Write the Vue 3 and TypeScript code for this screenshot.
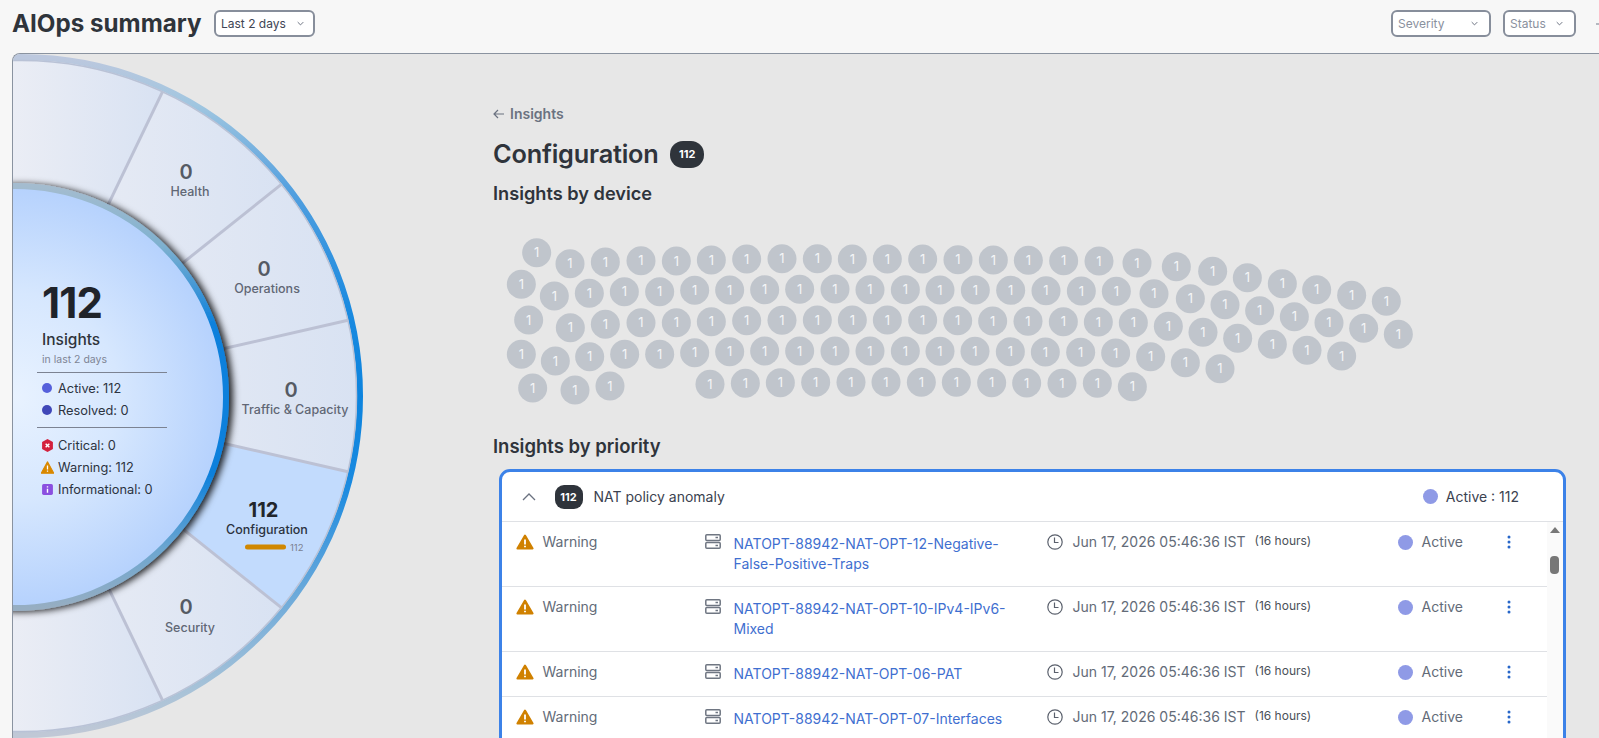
<template>
  <div class="page">
    <header class="top-bar">
      <h1>AIOps summary</h1>
      <button class="select time">
        <span>Last 2 days</span>
        <svg viewBox="0 0 10 6"><path d="M1 1l4 4 4-4" /></svg>
      </button>
      <div class="spacer" />
      <button class="select severity muted">
        <span>Severity</span>
        <svg viewBox="0 0 10 6"><path d="M1 1l4 4 4-4" /></svg>
      </button>
      <button class="select status muted">
        <span>Status</span>
        <svg viewBox="0 0 10 6"><path d="M1 1l4 4 4-4" /></svg>
      </button>
      <span class="cut-glyph" />
    </header>

    <main class="panel">
      <section class="wheel">
        <svg class="wheel-art" viewBox="13 54 467 684" width="467" height="684">
          <defs>
            <linearGradient id="cell">
              <stop offset="0" stop-color="#eceef5" />
              <stop offset="1" stop-color="#d5e0f2" />
            </linearGradient>
            <linearGradient id="rim" x1="0" y1="0" x2="0" y2="1">
              <stop offset="0" stop-color="#bcc8de" />
              <stop offset="0.07" stop-color="#a0c6e0" />
              <stop offset="0.2" stop-color="#519fdf" />
              <stop offset="0.37" stop-color="#1a8ae0" />
              <stop offset="0.5" stop-color="#0d84de" />
              <stop offset="0.63" stop-color="#1a8ae0" />
              <stop offset="0.8" stop-color="#6fabda" />
              <stop offset="0.93" stop-color="#a6c2d8" />
              <stop offset="1" stop-color="#c0c8d6" />
            </linearGradient>
            <linearGradient id="inner-rim" x1="0" y1="0" x2="0" y2="1">
              <stop offset="0" stop-color="#a4bccf" />
              <stop offset="0.14" stop-color="#7fb1cf" />
              <stop offset="0.33" stop-color="#0c80dc" />
              <stop offset="0.68" stop-color="#0c80dc" />
              <stop offset="0.86" stop-color="#6ca6d0" />
              <stop offset="1" stop-color="#97aec2" />
            </linearGradient>
            <radialGradient id="core" gradientUnits="userSpaceOnUse" cx="15" cy="397" r="208">
              <stop offset="0" stop-color="#e8f2ff" />
              <stop offset="0.5" stop-color="#d6e7fe" />
              <stop offset="1" stop-color="#b6d2fd" />
            </radialGradient>
            <clipPath id="disc"><circle cx="21" cy="396" r="336" /></clipPath>
            <filter id="core-shadow" x="-10%" y="-10%" width="125%" height="120%">
              <feDropShadow dx="4" dy="1" stdDeviation="3.5" flood-color="#000" flood-opacity="0.85" />
            </filter>
          </defs>

          <circle cx="21" cy="396" r="338.5" fill="none" stroke="url(#rim)" stroke-width="7" />
          <g clip-path="url(#disc)">
            <path v-for="cell in wheelCells" :key="cell.from" :d="cell.d" :fill="cell.selected ? '#c2dbfd' : 'url(#cell)'" />
            <line
              v-for="(s, i) in spokes"
              :key="i"
              :x1="s.x1"
              :y1="s.y1"
              :x2="s.x2"
              :y2="s.y2"
              stroke="#bcc1d4"
              stroke-width="3"
            />
          </g>
          <circle cx="21" cy="396" r="335.5" fill="none" stroke="#b9c2d6" stroke-width="1.5" />

          <circle cx="15" cy="397" r="211" fill="url(#core)" stroke="url(#inner-rim)" stroke-width="6" filter="url(#core-shadow)" />

          <g v-for="item in wheelLabels" :key="item.name" :class="{ on: item.selected }">
            <text class="cell-count" :x="item.countX" :y="item.countY" text-anchor="middle">{{ item.count }}</text>
            <text class="cell-name" :x="item.nameX" :y="item.nameY" text-anchor="middle">{{ item.name }}</text>
          </g>
          <rect x="245" y="544.5" width="41" height="5" rx="2.5" fill="#d08700" />
          <text class="bar-count" x="290" y="550.5">112</text>
        </svg>

        <div class="summary">
          <div class="big">112</div>
          <div class="big-label">Insights</div>
          <div class="big-sub">in last 2 days</div>
          <div class="group states">
            <div class="line"><i class="dot" style="background: #5560db" />Active: 112</div>
            <div class="line"><i class="dot" style="background: #3f47b8" />Resolved: 0</div>
          </div>
          <div class="group levels">
            <div class="line">
              <svg class="mini" viewBox="0 0 12 12">
                <path d="M6 0l5 2.8v6.4L6 12 1 9.200V2.800z" fill="#d3213d" />
                <path d="M4.300 4.300l3.400 3.400M7.700 4.300L4.300 7.700" stroke="#fff" stroke-width="1.300" />
              </svg>
              Critical: 0
            </div>
            <div class="line">
              <svg class="mini" viewBox="0 0 12 12">
                <path d="M6 .8l5.800 10.400H.2z" fill="#d98800" stroke="#d98800" stroke-linejoin="round" />
                <path d="M6 4.200v3.600M6 8.800v1.100" stroke="#fff" stroke-width="1.200" />
              </svg>
              Warning: 112
            </div>
            <div class="line">
              <svg class="mini" viewBox="0 0 12 12">
                <rect x="1" y="1" width="10" height="10" rx="1.500" fill="#8a4fe0" />
                <path d="M6 5.300v3.700M6 3v1.200" stroke="#fff" stroke-width="1.300" />
              </svg>
              Informational: 0
            </div>
          </div>
        </div>
      </section>

      <section class="detail">
        <a class="back">
          <svg viewBox="0 0 12 10"><path d="M11 5H1.500M5 1L1 5l4 4" /></svg>
          Insights
        </a>
        <div class="title-row">
          <h2>Configuration</h2>
          <span class="pill">112</span>
        </div>
        <h3>Insights by device</h3>

        <svg class="bubbles" width="940" height="190">
          <g v-for="(b, i) in bubbles" :key="i">
            <circle :cx="b.x" :cy="b.y" r="14.500" fill="#c0c5cc" />
            <text :x="b.x" :y="b.y + 4.500" text-anchor="middle">1</text>
          </g>
        </svg>

        <h3 class="priority-title">Insights by priority</h3>

        <div class="card">
          <div class="card-head">
            <svg class="chevron-up" viewBox="0 0 14 8"><path d="M1 7l6-6 6 6" /></svg>
            <span class="pill small">112</span>
            <span class="card-name">NAT policy anomaly</span>
            <span class="card-status"><i class="state" />Active : 112</span>
          </div>
          <div class="card-body">
            <div class="rows">
              <div v-for="row in insightRows" :key="row.device" class="row">
                <div class="cell severity-cell">
                  <svg class="warn" viewBox="0 0 18 16">
                    <path d="M9 1.500l7.600 13H1.400z" fill="#d08100" stroke="#d08100" stroke-width="2" stroke-linejoin="round" />
                    <path d="M9 5.500v5M9 11.800v1.500" stroke="#fff" stroke-width="1.800" />
                  </svg>
                  Warning
                </div>
                <div class="cell device-cell">
                  <svg class="server" viewBox="0 0 16 15">
                    <rect x=".8" y=".8" width="14.400" height="5.600" rx="1" />
                    <rect x=".8" y="8.600" width="14.400" height="5.600" rx="1" />
                    <path d="M10.500 3.600h2.500M10.500 11.400h2.500" />
                  </svg>
                  <a class="device">{{ row.device }}</a>
                </div>
                <div class="cell time-cell">
                  <svg class="clock" viewBox="0 0 16 16">
                    <circle cx="8" cy="8" r="7.200" />
                    <path d="M7.500 3.500v5h4" />
                  </svg>
                  <span class="stamp">Jun 17, 2026 05:46:36 IST</span>
                  <span class="ago">(16 hours)</span>
                </div>
                <div class="cell state-cell"><i class="state" />Active</div>
                <div class="cell menu-cell">
                  <svg class="kebab" viewBox="0 0 4 14">
                    <circle cx="2" cy="2" r="1.500" />
                    <circle cx="2" cy="7" r="1.500" />
                    <circle cx="2" cy="12" r="1.500" />
                  </svg>
                </div>
              </div>
            </div>
            <div class="scroll">
              <span class="scroll-up" />
              <span class="scroll-thumb" />
            </div>
          </div>
        </div>
      </section>
    </main>
  </div>
</template>

<script setup lang="ts">
  type Point = [number, number];

  // wheel is a half disc, cut into 7 slices of 180/7 degrees
  const cx = 16;
  const cy = 396;
  const slice = 180 / 7;

  const polar = (deg: number, r: number) => ({
    x: cx + r * Math.cos((deg * Math.PI) / 180),
    y: cy - r * Math.sin((deg * Math.PI) / 180),
  });

  const wedge = (start: number, end: number) => {
    const a = polar(start, 400);
    const b = polar(end, 400);
    return `M${cx} ${cy}L${a.x} ${a.y}A400 400 0 0 0 ${b.x} ${b.y}Z`;
  };

  // first and last cells run off the left edge of the panel
  const cellEdges: [number, number][] = [
    [2.5 * slice, 92],
    [1.5 * slice, 2.5 * slice],
    [0.5 * slice, 1.5 * slice],
    [-0.5 * slice, 0.5 * slice],
    [-1.5 * slice, -0.5 * slice],
    [-2.5 * slice, -1.5 * slice],
    [-92, -2.5 * slice],
  ];

  const wheelCells = cellEdges.map(([from, to], i) => ({
    from,
    selected: i === 4,
    d: wedge(from, to),
  }));

  const spokes = [2.5, 1.5, 0.5, -0.5, -1.5, -2.5].map((n) => {
    const a = polar(n * slice, 200);
    const b = polar(n * slice, 345);
    return { x1: a.x, y1: a.y, x2: b.x, y2: b.y };
  });

  const wheelLabels = [
    { name: 'Health', count: 0, countX: 186, countY: 179, nameX: 190, nameY: 196 },
    { name: 'Operations', count: 0, countX: 264, countY: 276, nameX: 267, nameY: 293 },
    { name: 'Traffic & Capacity', count: 0, countX: 291, countY: 397, nameX: 295, nameY: 413.5 },
    { name: 'Configuration', count: 112, countX: 263.5, countY: 517, nameX: 267, nameY: 533.5, selected: true },
    { name: 'Security', count: 0, countX: 186, countY: 614, nameX: 190, nameY: 631.5 },
  ];

  // bubble centres, read off the chart in 3x pixels, left and right half
  const leftHalf: Point[] = [
    [170, 488], [270, 521], [376, 516], [483, 512], [589, 513], [694, 510], [800, 507], [906, 506], [1012, 506], [1117, 507], [1222, 507], [1328, 507],
    [124, 583], [223, 618], [328, 610], [433, 605], [539, 605], [644, 601], [749, 600], [854, 599], [959, 598], [1065, 597], [1170, 599], [1276, 599],
    [146, 690], [271, 713], [376, 703], [483, 698], [589, 698], [694, 695], [800, 692], [906, 691], [1012, 690], [1117, 690], [1222, 690], [1328, 690],
    [124, 793], [226, 813], [329, 800], [434, 793], [539, 793], [644, 788], [749, 785], [854, 783], [959, 783], [1065, 783], [1170, 783], [1276, 783],
    [158, 894], [285, 900], [390, 888], [690, 883], [796, 880], [901, 878], [1007, 877], [1113, 877], [1218, 876], [1324, 877],
  ];
  const rightHalf: Point[] = [
    [54, 119], [160, 120], [265, 121], [371, 122], [477, 123], [591, 129], [709, 140], [818, 154], [922, 173], [1027, 191], [1130, 209], [1235, 226], [1339, 244],
    [0, 210], [106, 210], [212, 211], [318, 212], [424, 213], [529, 214], [642, 221], [751, 236], [855, 254], [959, 272], [1063, 290], [1167, 308], [1271, 325], [1375, 343],
    [53, 302], [158, 303], [264, 304], [370, 305], [475, 306], [580, 308], [685, 319], [789, 337], [893, 355], [997, 373], [1101, 391], [1205, 408],
    [0, 394], [105, 394], [211, 395], [316, 396], [422, 397], [527, 399], [632, 410], [736, 428], [840, 446],
    [49, 487], [155, 488], [260, 489], [366, 490], [472, 490], [577, 500],
  ];

  const bubbles = [
    ...leftHalf.map(([x, y]) => ({ x: x / 3, y: y / 3 - 132 })),
    ...rightHalf.map(([x, y]) => ({ x: 460 + x / 3, y: y / 3 - 2 })),
  ];

  const insightRows = [
    { device: 'NATOPT-88942-NAT-OPT-12-Negative-False-Positive-Traps' },
    { device: 'NATOPT-88942-NAT-OPT-10-IPv4-IPv6-Mixed' },
    { device: 'NATOPT-88942-NAT-OPT-06-PAT' },
    { device: 'NATOPT-88942-NAT-OPT-07-Interfaces' },
  ];
</script>

<style>
  html,
  body {
    margin: 0;
    overflow: hidden;
    background: #f7f7f7;
  }
</style>

<style scoped>
  .page {
    height: 738px;
    overflow: hidden;
    display: flex;
    flex-direction: column;
    font-family: Inter, 'Noto Sans', sans-serif;
    color: #2f343b;
  }

  .top-bar {
    height: 53px;
    flex: none;
    display: flex;
    align-items: flex-start;
    padding: 10px 0 0 12px;
    box-sizing: border-box;
    overflow: hidden;
  }

  .top-bar h1 {
    margin: 0 14px 0 0;
    font-size: 24.2px;
    line-height: 27px;
    font-weight: 700;
    width: 188px;
    white-space: nowrap;
    color: #2f343b;
  }

  .spacer {
    flex: 1;
  }

  .select {
    height: 27px;
    box-sizing: border-box;
    border: 2px solid #878e9b;
    border-radius: 6px;
    background: #fff;
    display: flex;
    align-items: center;
    justify-content: space-between;
    font-family: inherit;
    font-size: 12px;
    color: #3e4554;
    padding: 0 11px 0 5px;
  }

  .select svg {
    width: 7px;
    height: 5px;
    fill: none;
    stroke: #6a7180;
    stroke-width: 1.4;
  }

  .select.muted {
    color: #8a919e;
  }

  .select.time {
    width: 101px;
    padding-right: 9px;
  }

  .select.severity {
    width: 100px;
    margin-right: 12px;
  }

  .select.status {
    width: 73px;
  }

  .cut-glyph {
    width: 3px;
    height: 2px;
    margin: 13px 0 0 20px;
    background: #b4b8c0;
    flex: none;
  }

  .panel {
    flex: 1;
    min-height: 0;
    margin-left: 12px;
    display: flex;
    border: 1px solid #8a93a0;
    border-width: 1px 0 0 1px;
    border-top-left-radius: 8px;
    background: #e7e7e7;
    overflow: hidden;
  }

  .wheel {
    width: 467px;
    flex: none;
    position: relative;
    overflow: hidden;
  }

  .wheel-art {
    display: block;
  }

  .cell-count {
    font-size: 20px;
    font-weight: 600;
    fill: #555a64;
  }

  .cell-name {
    font-size: 12.5px;
    font-weight: 500;
    fill: #616775;
  }

  .on .cell-count {
    fill: #22262c;
    font-weight: 700;
  }

  .on .cell-name {
    fill: #2b3240;
  }

  .bar-count {
    font-size: 9.5px;
    fill: #7a8090;
  }

  /* text block on top of the core circle */
  .summary {
    position: absolute;
    left: 24px;
    top: 226px;
    width: 130px;
  }

  .big {
    font-size: 42px;
    line-height: 46px;
    font-weight: 700;
    color: #1f232a;
    padding-left: 5px;
    letter-spacing: -0.8px;
  }

  .big-label {
    font-size: 15.5px;
    line-height: 18px;
    font-weight: 500;
    margin-top: 5px;
    padding-left: 5px;
  }

  .big-sub {
    font-size: 10.5px;
    line-height: 14px;
    color: #7e8595;
    margin: 4px 0 5px;
    padding-left: 5px;
  }

  .group {
    padding-left: 5px;
    border-top: 1px solid #7c8392;
  }

  .states {
    padding-top: 4px;
    padding-bottom: 6px;
  }

  .levels {
    padding-top: 6px;
  }

  .line {
    display: flex;
    align-items: center;
    gap: 6px;
    height: 22px;
    font-size: 12.8px;
    color: #2c3340;
    white-space: nowrap;
  }

  .dot {
    width: 10px;
    height: 10px;
    border-radius: 50%;
    flex: none;
  }

  .mini {
    width: 13px;
    height: 13px;
    margin: 0 -1.5px;
    flex: none;
  }

  .detail {
    flex: 1;
    min-width: 0;
    padding: 51px 0 0 13px;
    box-sizing: border-box;
  }

  .back {
    display: flex;
    align-items: center;
    gap: 5px;
    font-size: 14px;
    line-height: 18px;
    font-weight: 600;
    color: #6b7280;
  }

  .back svg {
    width: 12px;
    height: 10px;
    fill: none;
    stroke: #6b7280;
    stroke-width: 1.2;
  }

  .title-row {
    display: flex;
    align-items: center;
    gap: 11.5px;
    margin-top: 16px;
    height: 30px;
  }

  .title-row h2 {
    margin: 0;
    font-size: 25.3px;
    line-height: 30px;
    font-weight: 600;
    letter-spacing: -0.2px;
  }

  .pill {
    display: inline-flex;
    align-items: center;
    justify-content: center;
    width: 34px;
    height: 27px;
    border-radius: 13px;
    background: #2f343b;
    color: #fff;
    font-size: 11px;
    font-weight: 700;
  }

  .pill.small {
    width: 28px;
    height: 24px;
    border-radius: 9px;
  }

  h3 {
    margin: 12px 0 0;
    font-size: 18.2px;
    line-height: 24px;
    font-weight: 600;
  }

  .bubbles {
    display: block;
    margin: 17px 0 0 -13px;
  }

  .bubbles text {
    font-size: 13px;
    fill: #f4f5f7;
  }

  h3.priority-title {
    margin-top: 22px;
    font-size: 18.5px;
  }

  .card {
    margin: 11px 33px 0 5.5px;
    height: 300px;
    background: #fff;
    border: 3px solid #3c82e8;
    border-radius: 11px;
    box-sizing: border-box;
    overflow: hidden;
  }

  .card-head {
    height: 49px;
    display: flex;
    align-items: center;
    padding: 0 44px 0 20px;
    border-bottom: 1px solid #dfe1e5;
    font-size: 14px;
    color: #3b4250;
  }

  .chevron-up {
    width: 14px;
    height: 8px;
    margin-right: 19px;
    fill: none;
    stroke: #6a7180;
    stroke-width: 1.3;
  }

  .card-name {
    margin-left: 11px;
  }

  .card-status {
    margin-left: auto;
    display: flex;
    align-items: center;
    gap: 8px;
  }

  .state {
    display: block;
    width: 15px;
    height: 15px;
    border-radius: 50%;
    background: #8f9ae6;
    flex: none;
  }

  .card-body {
    display: flex;
    height: 240px;
  }

  .rows {
    flex: 1;
    min-width: 0;
  }

  .row {
    display: grid;
    grid-template-columns: 189px 342px 351px 100px 1fr;
    padding: 12px 0 12px 14px;
    border-bottom: 1px solid #dfe1e5;
    font-size: 14px;
    line-height: 20px;
    color: #636b78;
  }

  .cell {
    display: flex;
    align-items: flex-start;
  }

  .warn {
    width: 18px;
    height: 16px;
    margin: 2px 9px 0 0;
    flex: none;
  }

  .severity-cell {
    margin-top: -2px;
  }

  .server {
    width: 16px;
    height: 15px;
    margin: 0 13px 0 0;
    fill: none;
    stroke: #6f7682;
    stroke-width: 1.5;
    flex: none;
  }

  .device {
    color: #3f6fd0;
    width: 280px;
  }

  .clock {
    width: 16px;
    height: 16px;
    margin: 2px 10px 0 0;
    fill: none;
    stroke: #5a606c;
    stroke-width: 1.2;
    flex: none;
  }

  .time-cell {
    margin-top: -2px;
  }

  .ago {
    font-size: 12px;
    line-height: 18px;
    color: #4a5058;
    margin-left: 9px;
    white-space: nowrap;
  }

  .stamp {
    white-space: nowrap;
  }

  .state-cell {
    gap: 9px;
    margin-top: -2px;
    align-items: center;
    height: 20px;
  }

  .menu-cell {
    justify-content: center;
    padding-right: 26px;
    margin-top: 1px;
  }

  .kebab {
    width: 4px;
    height: 14px;
    fill: #2766c9;
  }

  .scroll {
    width: 16px;
    flex: none;
    background: #fafafa;
    position: relative;
  }

  .scroll-up {
    position: absolute;
    left: 3px;
    top: 5px;
    border: 5px solid transparent;
    border-top: 0;
    border-bottom: 6px solid #777;
  }

  .scroll-thumb {
    position: absolute;
    left: 3px;
    top: 34px;
    width: 9px;
    height: 18px;
    border-radius: 4px;
    background: #777;
  }
</style>
